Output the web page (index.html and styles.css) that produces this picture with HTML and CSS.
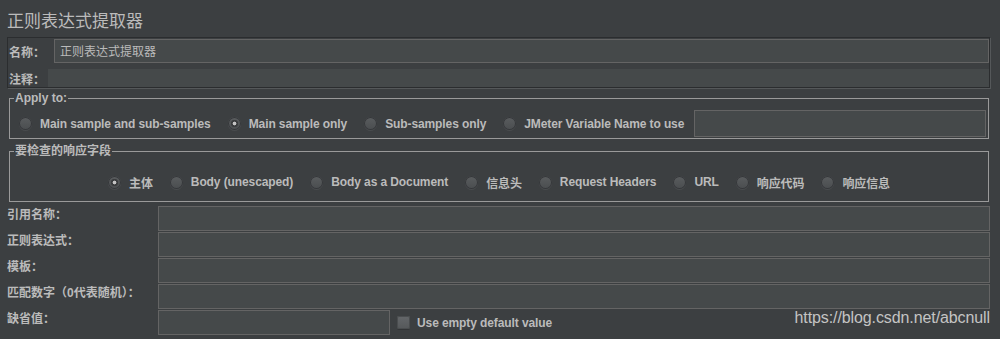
FILE: index.html
```html
<!DOCTYPE html>
<html lang="zh">
<head>
<meta charset="utf-8">
<title>正则表达式提取器</title>
<link rel="stylesheet" href="styles.css">
</head>
<body>
<div class="page">
  <h1 class="title">正则表达式提取器</h1>
  <div class="panel">
    <div class="prow name-row">
      <span class="plabel name-label">名称：</span>
      <div class="field name-field">正则表达式提取器</div>
    </div>
    <div class="prow comment-row">
      <span class="plabel comment-label">注释：</span>
      <div class="comment-field"></div>
    </div>
  </div>

  <fieldset class="group apply">
    <legend>Apply to:</legend>
    <div class="radios">
      <label class="radio"><span class="dot"></span>Main sample and sub-samples</label>
      <label class="radio"><span class="dot on"></span>Main sample only</label>
      <label class="radio"><span class="dot"></span>Sub-samples only</label>
      <label class="radio last-radio"><span class="dot"></span>JMeter Variable Name to use</label>
      <div class="field var-field"></div>
    </div>
  </fieldset>

  <fieldset class="group fields">
    <legend>要检查的响应字段</legend>
    <div class="radios centered">
      <label class="radio"><span class="dot on"></span>主体</label>
      <label class="radio"><span class="dot"></span>Body (unescaped)</label>
      <label class="radio"><span class="dot"></span>Body as a Document</label>
      <label class="radio"><span class="dot"></span>信息头</label>
      <label class="radio"><span class="dot"></span>Request Headers</label>
      <label class="radio"><span class="dot"></span>URL</label>
      <label class="radio"><span class="dot"></span>响应代码</label>
      <label class="radio end"><span class="dot"></span>响应信息</label>
    </div>
  </fieldset>

  <div class="form">
    <span class="flabel">引用名称：</span><div class="field"></div>
    <span class="flabel">正则表达式：</span><div class="field"></div>
    <span class="flabel">模板：</span><div class="field"></div>
    <span class="flabel">匹配数字（0代表随机）：</span><div class="field"></div>
    <span class="flabel">缺省值：</span>
    <div class="last">
      <div class="field short"></div>
      <label class="check"><span class="box"></span>Use empty default value</label>
    </div>
  </div>

  <div class="watermark">https://blog.csdn.net/abcnull</div>
</div>
</body>
</html>
```

FILE: styles.css
```css
* { box-sizing: border-box; }

body {
  margin: 0;
  background: #3c3f41;
  color: #bbbbbb;
  font-family: "Liberation Sans", "Noto Sans CJK SC", sans-serif;
  font-size: 12px;
}

.page {
  position: relative;
  width: 1000px;
  height: 339px;
  overflow: hidden;
}

.title {
  margin: 0;
  height: 37px;
  padding: 8px 7px 0;
  font-family: "Noto Sans CJK SC", sans-serif;
  font-size: 17px;
  line-height: 24px;
  font-weight: normal;
  color: #bbbbbb;
}

.panel {
  margin-left: 7px;
  width: 983px;
  border: 1px solid #2b2d2f;
  box-shadow: 1px 1px 0 #55585a;
  padding: 1px 0 0 1px;
}

.prow {
  display: flex;
  align-items: center;
}

.plabel {
  font-weight: bold;
  white-space: nowrap;
}

.name-row { height: 24px; }
.name-label { width: 45px; }

.field {
  height: 25px;
  background: #45494a;
  border: 1px solid #646464;
}

.name-field {
  flex: 1;
  height: 24px;
  padding-left: 5px;
  line-height: 22px;
  font-family: "Noto Sans CJK SC", sans-serif;
}

.comment-row {
  margin-top: 6px;
  height: 18px;
}
.comment-label { width: 39px; }
.comment-field {
  flex: 1;
  height: 18px;
  background: #45494a;
}

.group {
  margin: 3px 0 0 9px;
  width: 980px;
  min-width: 0;
  border: 1px solid #9a9a9a;
  padding: 5px 2px 1px 0;
}

.group legend {
  margin-left: 4px;
  padding: 0 1px;
  line-height: 14px;
  font-weight: bold;
}

.radios {
  display: flex;
  align-items: center;
  height: 27px;
  padding-left: 9px;
}

.radio {
  display: flex;
  align-items: center;
  gap: 8px;
  margin-right: 17px;
  font-weight: bold;
  letter-spacing: -0.1px;
  white-space: nowrap;
}

.radio.last-radio { margin-right: 10px; }
.radio.end { margin-right: 0; }

.dot {
  width: 13px;
  height: 13px;
  border-radius: 50%;
  background: linear-gradient(#5a5d5f, #4a4d4f);
  box-shadow: inset 0 0 0 1px #35373a, 0 1px 0 #4a4d4f;
  flex: none;
}

.dot.on {
  background:
    radial-gradient(circle, #c4c4c4 0 1.6px, #3a3c3e 2.2px 3.4px, transparent 4px),
    linear-gradient(#5a5d5f, #4a4d4f);
}

.var-field {
  flex: 1;
  height: 27px;
}

.fields {
  margin-top: 5px;
  padding: 15px 0 10px 0;
}

.fields .radios {
  height: 18px;
  padding-left: 0;
  justify-content: center;
}

.form {
  margin: 4px 0 0 7px;
  display: grid;
  grid-template-columns: 151px 832px;
  grid-auto-rows: 25px;
  row-gap: 1px;
}

.flabel {
  font-weight: bold;
  line-height: 14px;
  padding-top: 2px;
  white-space: nowrap;
}

.last {
  display: flex;
  align-items: center;
}

.short {
  width: 232px;
  flex: none;
}

.check {
  display: flex;
  align-items: center;
  gap: 7px;
  margin-left: 7px;
  font-weight: bold;
  letter-spacing: -0.1px;
  white-space: nowrap;
}

.box {
  width: 13px;
  height: 13px;
  border-radius: 2px;
  background: linear-gradient(#64676a, #55585a);
  box-shadow: inset 0 0 0 1px #4a4d4f, 0 1px 0 #323436;
}

.watermark {
  position: absolute;
  right: 10px;
  top: 309px;
  font-size: 16px;
  line-height: 18px;
  letter-spacing: -0.1px;
  color: #c4c4c4;
}
```
